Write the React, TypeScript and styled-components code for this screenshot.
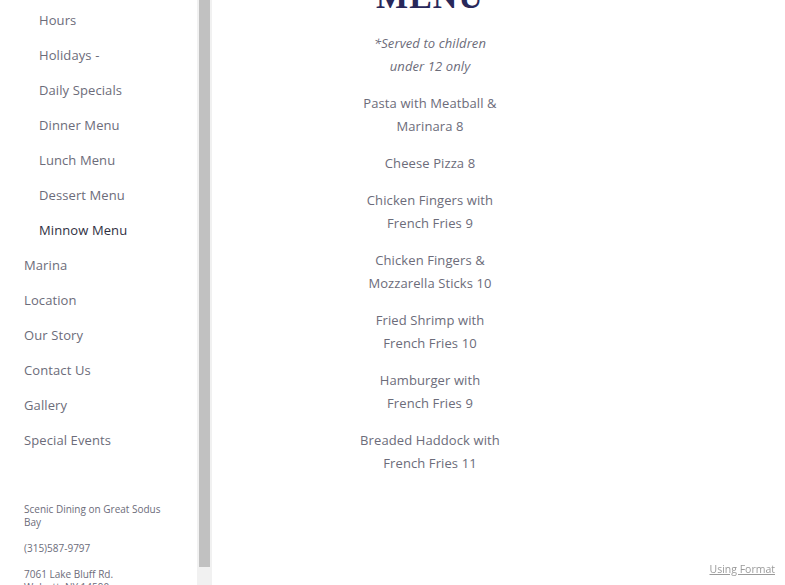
import styled, { createGlobalStyle } from "styled-components";

const GlobalStyle = createGlobalStyle`
  html, body {
    margin: 0;
    padding: 0;
    height: 100%;
    overflow: hidden;
    background: #fff;
  }
  body {
    font-family: "Open Sans", "Liberation Sans", sans-serif;
  }
`;

const Page = styled.div`
  display: flex;
  height: 585px;
  overflow: hidden;
`;

const Sidebar = styled.aside`
  display: flex;
  width: 212px;
  flex-shrink: 0;
  height: 100%;
  background: #fff;
`;

const SideInner = styled.div`
  flex: 1;
  padding: 3px 0 0 24px;
  overflow: hidden;
`;

const NavList = styled.ul`
  list-style: none;
  margin: 0;
  padding: 0;
`;

const NavItem = styled.li<{ $sub?: boolean; $active?: boolean }>`
  padding: 8px 0 8px ${(p) => (p.$sub ? "15px" : "0")};
  font-size: 13px;
  line-height: 19px;
  letter-spacing: 0.1px;
  color: ${(p) => (p.$active ? "#2f2f3f" : "#6c6c7a")};
`;

const Footer = styled.div`
  margin-top: 45px;
  width: 150px;
`;

const FooterText = styled.p`
  margin: 0 0 13px;
  font-size: 10px;
  line-height: 13px;
  color: #6c6c7a;
`;

const Rail = styled.div`
  width: 15px;
  height: 100%;
  background: #f1f1f1;
  display: flex;
  flex-direction: column;
  align-items: center;
`;

const Thumb = styled.div`
  width: 11px;
  height: 567px;
  background: #c1c1c1;
`;

const Main = styled.main`
  flex: 1;
  display: flex;
  padding-left: 148px;
  overflow: hidden;
`;

const MenuColumn = styled.section`
  width: 140px;
  margin-top: -23px;
  text-align: center;
`;

const Title = styled.h1`
  margin: 0 -40px 15px;
  font-family: "Liberation Serif", "DejaVu Serif", serif;
  font-size: 34px;
  line-height: 40px;
  font-weight: 700;
  letter-spacing: 1px;
  color: #28285a;
`;

const Item = styled.p<{ $italic?: boolean }>`
  margin: 0 0 14px;
  font-size: 13px;
  line-height: 23px;
  letter-spacing: 0.1px;
  color: #6c6c7a;
  font-style: ${(p) => (p.$italic ? "italic" : "normal")};
`;

const Badge = styled.a`
  position: fixed;
  right: 10px;
  bottom: 9px;
  font-size: 10.5px;
  color: #9a9a9a;
  text-decoration: underline;
  font-family: "Open Sans", "Liberation Sans", sans-serif;
`;

const nav = [
  { label: "Hours", sub: true },
  { label: "Holidays -", sub: true },
  { label: "Daily Specials", sub: true },
  { label: "Dinner Menu", sub: true },
  { label: "Lunch Menu", sub: true },
  { label: "Dessert Menu", sub: true },
  { label: "Minnow Menu", sub: true, active: true },
  { label: "Marina" },
  { label: "Location" },
  { label: "Our Story" },
  { label: "Contact Us" },
  { label: "Gallery" },
  { label: "Special Events" },
];

const items = [
  "Pasta with Meatball & Marinara 8",
  "Cheese Pizza 8",
  "Chicken Fingers with French Fries 9",
  "Chicken Fingers & Mozzarella Sticks 10",
  "Fried Shrimp with French Fries 10",
  "Hamburger with French Fries 9",
  "Breaded Haddock with French Fries 11",
];

export default function App() {
  return (
    <>
      <GlobalStyle />
      <Page>
        <Sidebar>
          <SideInner>
            <NavList>
              {nav.map((n) => (
                <NavItem key={n.label} $sub={n.sub} $active={n.active}>
                  {n.label}
                </NavItem>
              ))}
            </NavList>
            <Footer>
              <FooterText>Scenic Dining on Great Sodus Bay</FooterText>
              <FooterText>(315)587-9797</FooterText>
              <FooterText>
                7061 Lake Bluff Rd.
                <br />
                Wolcott, NY 14590
              </FooterText>
            </Footer>
          </SideInner>
          <Rail>
            <Thumb />
          </Rail>
        </Sidebar>
        <Main>
          <MenuColumn>
            <Title>MENU</Title>
            <Item $italic>*Served to children under 12 only</Item>
            {items.map((t) => (
              <Item key={t}>{t}</Item>
            ))}
          </MenuColumn>
        </Main>
      </Page>
      <Badge href="#">Using Format</Badge>
    </>
  );
}
